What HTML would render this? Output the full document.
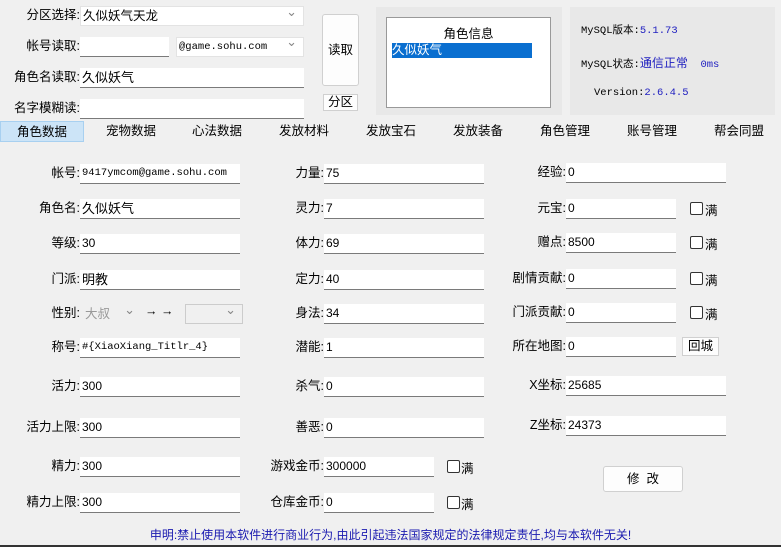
<!DOCTYPE html>
<html><head><meta charset="utf-8"><style>
*{box-sizing:border-box}
body{margin:0;width:781px;height:547px;background:#f0f0f0;font-family:"Liberation Sans","Noto Sans CJK SC",sans-serif;font-size:12.5px;color:#000;position:relative;overflow:hidden}
.a{position:absolute;white-space:nowrap}
.l{position:absolute;text-align:right;white-space:nowrap;line-height:19px}
.i{position:absolute;background:#fff;border-bottom:1px solid #7a7a7a;height:20px;line-height:19px;padding-left:2px;font-size:12px;white-space:nowrap;overflow:hidden}
.m{font-family:"Liberation Mono","Noto Sans CJK SC",monospace;font-size:10.5px}
.cb{position:absolute;background:#fff;border:1px solid #e3e3e3;height:20px;line-height:18px;padding-left:2px}
.cb:after{content:"⌄";position:absolute;right:6px;top:-4px;color:#888;font-size:13px}
.btn{position:absolute;background:#fdfdfd;border:1px solid #d0d0d0;border-radius:3px;text-align:center}
.ck{position:absolute;width:13px;height:13px;border:1px solid #333;border-radius:2px;background:#fff}
.tab{position:absolute;top:121px;height:21px;line-height:21px;text-align:center;width:86px}
.b{color:#2020c0}
</style></head><body>
<div class="l" style="right:701px;top:6px">分区选择:</div>
<div class="cb" style="left:80px;top:6px;width:224px">久似妖气天龙</div>
<div class="l" style="right:701px;top:37px">帐号读取:</div>
<div class="i" style="left:80px;top:37px;width:89px"></div>
<div class="cb m" style="left:176px;top:37px;width:128px">@game.sohu.com</div>
<div class="l" style="right:701px;top:68px">角色名读取:</div>
<div class="i" style="left:80px;top:68px;width:224px;font-size:13px">久似妖气</div>
<div class="l" style="right:701px;top:99px">名字模糊读:</div>
<div class="i" style="left:80px;top:99px;width:224px"></div>
<div class="btn" style="left:322px;top:14px;width:37px;height:72px;line-height:70px">读取</div>
<div class="btn" style="left:323px;top:94px;width:35px;height:17px;line-height:15px;border-radius:0">分区</div>
<div class="a" style="left:376px;top:7px;width:186px;height:108px;background:#e8e8e8"></div>
<div class="a" style="left:386px;top:17px;width:165px;height:91px;background:#fff;border:1px solid #999"></div>
<div class="a" style="left:386px;top:23px;width:165px;text-align:center">角色信息</div>
<div class="a" style="left:392px;top:43px;width:140px;height:15px;background:#0a6fd0;color:#fff;line-height:15px">久似妖气</div>
<div class="a" style="left:570px;top:7px;width:205px;height:108px;background:#e8e8e8"></div>
<div class="a m" style="left:581px;top:22px">MySQL版本:<span class="b">5.1.73</span></div>
<div class="a m" style="left:581px;top:54px">MySQL状态:<span class="b" style="font-size:12px">通信正常</span> <span class="b">&nbsp;0ms</span></div>
<div class="a m" style="left:594px;top:87px">Version:<span class="b">2.6.4.5</span></div>
<div class="tab" style="left:0;width:84px;background:#cce4f7;border:1px solid #a8d0f0">角色数据</div>
<div class="tab" style="left:88px">宠物数据</div>
<div class="tab" style="left:174px">心法数据</div>
<div class="tab" style="left:261px">发放材料</div>
<div class="tab" style="left:348px">发放宝石</div>
<div class="tab" style="left:435px">发放装备</div>
<div class="tab" style="left:522px">角色管理</div>
<div class="tab" style="left:609px">账号管理</div>
<div class="tab" style="left:696px">帮会同盟</div>

<div class="l" style="right:701px;top:164px">帐号:</div><div class="i m" style="left:80px;top:164px;width:160px">9417ymcom@game.sohu.com</div>
<div class="l" style="right:701px;top:199px">角色名:</div><div class="i" style="left:80px;top:199px;width:160px;font-size:13px">久似妖气</div>
<div class="l" style="right:701px;top:234px">等级:</div><div class="i" style="left:80px;top:234px;width:160px">30</div>
<div class="l" style="right:701px;top:270px">门派:</div><div class="i" style="left:80px;top:270px;width:160px;font-size:13px">明教</div>
<div class="l" style="right:701px;top:304px">性别:</div>
<div class="cb" style="left:82px;top:304px;width:60px;background:#f0f0f0;color:#999;border-color:#f0f0f0">大叔</div>
<div class="a" style="left:145px;top:304px">→ →</div>
<div class="cb" style="left:185px;top:304px;width:58px;background:#f0f0f0;border-color:#ccc"></div>
<div class="l" style="right:701px;top:338px">称号:</div><div class="i m" style="left:80px;top:338px;width:160px">#{XiaoXiang_Titlr_4}</div>
<div class="l" style="right:701px;top:377px">活力:</div><div class="i" style="left:80px;top:377px;width:160px">300</div>
<div class="l" style="right:701px;top:418px">活力上限:</div><div class="i" style="left:80px;top:418px;width:160px">300</div>
<div class="l" style="right:701px;top:457px">精力:</div><div class="i" style="left:80px;top:457px;width:160px">300</div>
<div class="l" style="right:701px;top:493px">精力上限:</div><div class="i" style="left:80px;top:493px;width:160px">300</div>

<div class="l" style="right:457px;top:164px">力量:</div><div class="i" style="left:324px;top:164px;width:160px">75</div>
<div class="l" style="right:457px;top:199px">灵力:</div><div class="i" style="left:324px;top:199px;width:160px">7</div>
<div class="l" style="right:457px;top:234px">体力:</div><div class="i" style="left:324px;top:234px;width:160px">69</div>
<div class="l" style="right:457px;top:270px">定力:</div><div class="i" style="left:324px;top:270px;width:160px">40</div>
<div class="l" style="right:457px;top:304px">身法:</div><div class="i" style="left:324px;top:304px;width:160px">34</div>
<div class="l" style="right:457px;top:338px">潜能:</div><div class="i" style="left:324px;top:338px;width:160px">1</div>
<div class="l" style="right:457px;top:377px">杀气:</div><div class="i" style="left:324px;top:377px;width:160px">0</div>
<div class="l" style="right:457px;top:418px">善恶:</div><div class="i" style="left:324px;top:418px;width:160px">0</div>
<div class="l" style="right:457px;top:457px">游戏金币:</div><div class="i" style="left:324px;top:457px;width:110px">300000</div>
<div class="ck" style="left:447px;top:460px"></div><div class="a" style="left:461px;top:458px">满</div>
<div class="l" style="right:457px;top:493px">仓库金币:</div><div class="i" style="left:324px;top:493px;width:110px">0</div>
<div class="ck" style="left:447px;top:496px"></div><div class="a" style="left:461px;top:494px">满</div>

<div class="l" style="right:215px;top:163px">经验:</div><div class="i" style="left:566px;top:163px;width:160px">0</div>
<div class="l" style="right:215px;top:199px">元宝:</div><div class="i" style="left:566px;top:199px;width:110px">0</div>
<div class="ck" style="left:690px;top:202px"></div><div class="a" style="left:705px;top:200px">满</div>
<div class="l" style="right:215px;top:233px">赠点:</div><div class="i" style="left:566px;top:233px;width:110px">8500</div>
<div class="ck" style="left:690px;top:236px"></div><div class="a" style="left:705px;top:234px">满</div>
<div class="l" style="right:215px;top:269px">剧情贡献:</div><div class="i" style="left:566px;top:269px;width:110px">0</div>
<div class="ck" style="left:690px;top:272px"></div><div class="a" style="left:705px;top:270px">满</div>
<div class="l" style="right:215px;top:303px">门派贡献:</div><div class="i" style="left:566px;top:303px;width:110px">0</div>
<div class="ck" style="left:690px;top:306px"></div><div class="a" style="left:705px;top:304px">满</div>
<div class="l" style="right:215px;top:337px">所在地图:</div><div class="i" style="left:566px;top:337px;width:110px">0</div>
<div class="btn" style="left:682px;top:337px;width:37px;height:19px;line-height:17px;border-radius:0">回城</div>
<div class="l" style="right:215px;top:376px">X坐标:</div><div class="i" style="left:566px;top:376px;width:160px">25685</div>
<div class="l" style="right:215px;top:416px">Z坐标:</div><div class="i" style="left:566px;top:416px;width:160px">24373</div>
<div class="btn" style="left:603px;top:466px;width:80px;height:26px;line-height:24px">修&nbsp;&nbsp;改</div>

<div class="a" style="left:0;width:781px;top:526px;text-align:center;color:#1a1ab0;font-size:12px">申明:禁止使用本软件进行商业行为,由此引起违法国家规定的法律规定责任,均与本软件无关!</div>
<div class="a" style="left:0;top:545px;width:781px;height:2px;background:#333"></div>
</body></html>
